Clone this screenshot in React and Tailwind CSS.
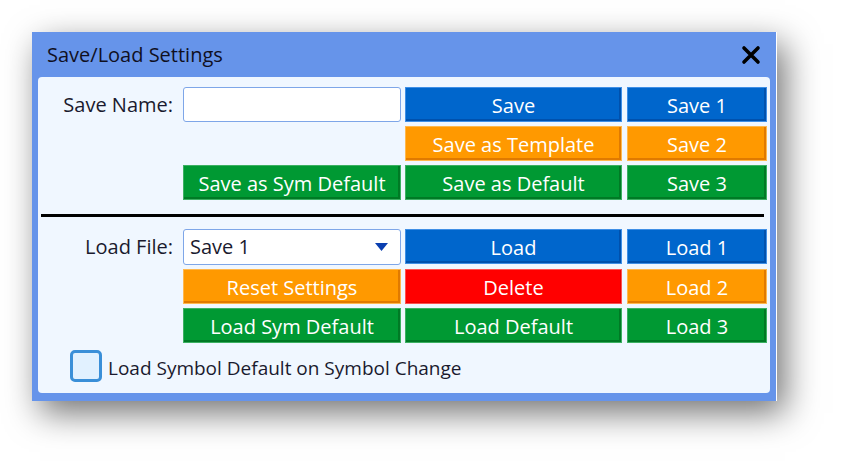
import React from "react";

const tones = {
  blue: "bg-[#0066cc] border-[#3f8fe6] shadow-[inset_-2px_-2px_0_#0051ad]",
  orange: "bg-[#ff9900] border-[#ffb84d] shadow-[inset_-2px_-2px_0_#e07a00]",
  green: "bg-[#009933] border-[#3cb062] shadow-[inset_-2px_-2px_0_#007a25]",
  red: "bg-[#ff0000] border-[#ff5050] shadow-[inset_-1px_-1px_0_#e60000]",
};

function Btn({ tone, children }) {
  return (
    <button
      className={`h-[35px] w-full border pt-[2px] text-[20px] leading-none text-white ${tones[tone]}`}
    >
      {children}
    </button>
  );
}

function Label({ children }) {
  return (
    <div className="flex h-[35px] items-center justify-end pr-[10px] text-[20px] text-[#1a1a2e]">
      {children}
    </div>
  );
}

// label | wide | wide | narrow
const cols = "grid grid-cols-[145px_218px_221px_145px] gap-y-[4px]";

export default function App() {
  return (
    <div
      className="min-h-[465px] w-[843px] bg-white pl-[32px] pt-[32px]"
      style={{ fontFamily: '"Open Sans", "Noto Sans", sans-serif' }}
    >
      <div className="flex h-[369px] w-[745px] flex-col border-r border-white bg-[#6694ea] shadow-[8px_12px_32px_rgba(0,0,0,0.55)]">
        {/* title bar */}
        <div className="flex h-[45px] items-center justify-between pl-[15px] pr-[15px]">
          <span className="text-[20px] text-[#10101f]">Save/Load Settings</span>
          <svg width="20" height="20" viewBox="0 0 20 20">
            <path d="M3 3 L17 17 M17 3 L3 17" stroke="#000" strokeWidth="3.6" strokeLinecap="round" />
          </svg>
        </div>

        {/* body */}
        <div className="mb-[8px] ml-[6px] mr-[6px] flex-1 rounded-[4px] bg-[#f0f7ff] pr-[3px] pt-[10px]">
          <div className={cols}>
            <Label>Save Name:</Label>
            <input className="h-[35px] rounded-[3px] border border-[#7ea6e8] bg-white outline-none" />
            <div className="pl-[4px]"><Btn tone="blue">Save</Btn></div>
            <div className="pl-[5px]"><Btn tone="blue">Save 1</Btn></div>

            <div />
            <div />
            <div className="pl-[4px]"><Btn tone="orange">Save as Template</Btn></div>
            <div className="pl-[5px]"><Btn tone="orange">Save 2</Btn></div>

            <div />
            <Btn tone="green">Save as Sym Default</Btn>
            <div className="pl-[4px]"><Btn tone="green">Save as Default</Btn></div>
            <div className="pl-[5px]"><Btn tone="green">Save 3</Btn></div>
          </div>

          <div className="mb-[12px] ml-[3px] mr-[3px] mt-[14px] h-[3px] bg-black" />

          <div className={cols}>
            <Label>Load File:</Label>
            <div className="flex h-[36px] items-center justify-between rounded-[3px] border border-[#7ea6e8] bg-white pl-[6px] pr-[12px] text-[20px] text-[#1a1a2e]">
              <span>Save 1</span>
              <svg width="13" height="8" viewBox="0 0 13 8">
                <path d="M0 0 H13 L6.5 8 Z" fill="#0a3fb0" />
              </svg>
            </div>
            <div className="pl-[4px]"><Btn tone="blue">Load</Btn></div>
            <div className="pl-[5px]"><Btn tone="blue">Load 1</Btn></div>

            <div />
            <Btn tone="orange">Reset Settings</Btn>
            <div className="pl-[4px]"><Btn tone="red">Delete</Btn></div>
            <div className="pl-[5px]"><Btn tone="orange">Load 2</Btn></div>

            <div />
            <Btn tone="green">Load Sym Default</Btn>
            <div className="pl-[4px]"><Btn tone="green">Load Default</Btn></div>
            <div className="pl-[5px]"><Btn tone="green">Load 3</Btn></div>
          </div>

          <label className="ml-[32px] mt-[6px] flex items-center gap-[6px] text-[19px] text-[#1a1a2e]">
            <span className="h-[32px] w-[32px] rounded-[5px] border-[3px] border-[#3a8fd8] bg-[#e1f1ff]" />
            <span className="pt-[5px]">Load Symbol Default on Symbol Change</span>
          </label>
        </div>
      </div>
    </div>
  );
}
